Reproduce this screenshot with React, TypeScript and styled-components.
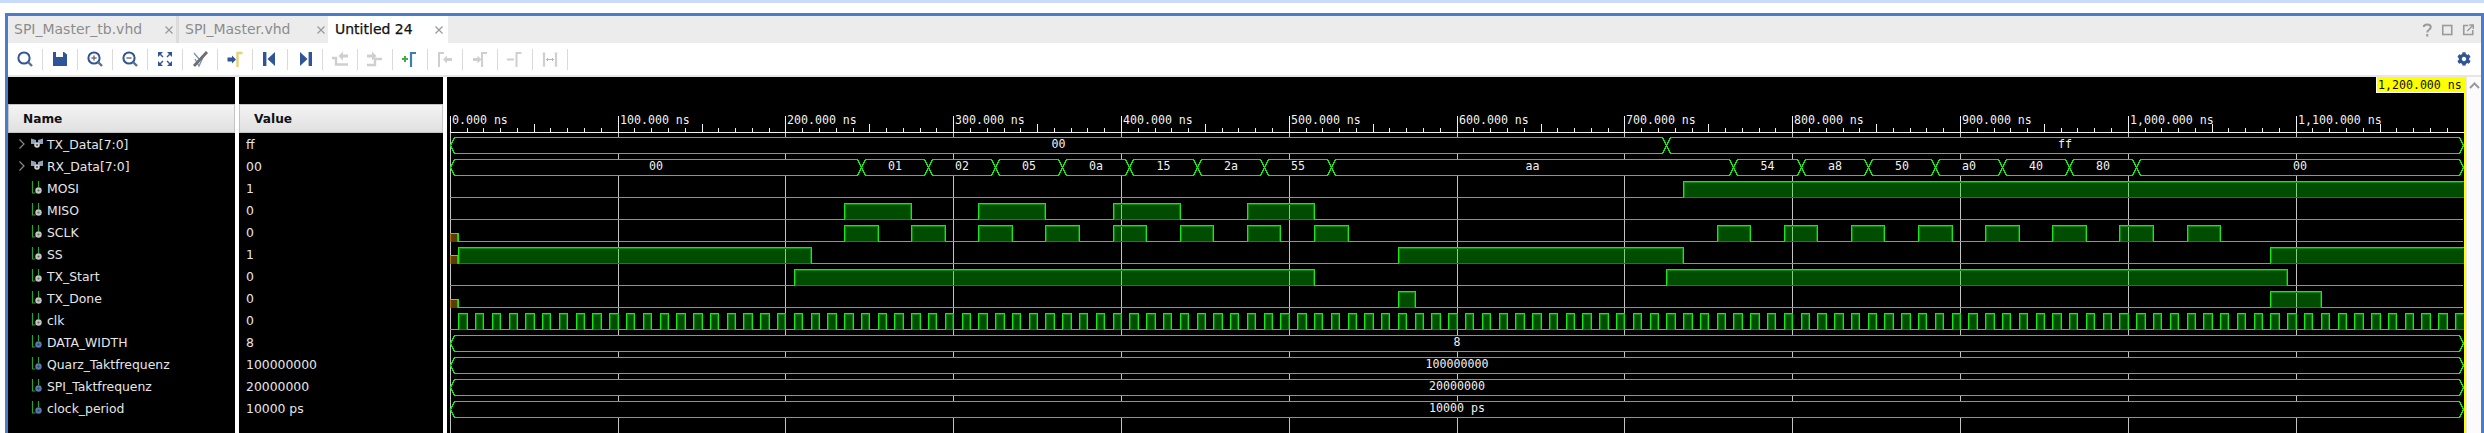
import React from 'react';
import styled, { createGlobalStyle } from 'styled-components';
import { FaCog } from 'react-icons/fa';

const Global = createGlobalStyle`
  html, body { margin: 0; padding: 0; background: #fff; overflow: hidden; }
  body { font-family: "DejaVu Sans", sans-serif; }
`;

const Page = styled.div`
  width: 2484px; height: 433px; overflow: hidden; display: flex; flex-direction: column;
  background: #fff; border-top: 3px solid #c9dbfb; box-sizing: border-box; padding: 10px 0 0 5px;
`;
const Frame = styled.div`
  flex: 1; min-height: 0; display: flex; flex-direction: column;
  border: 3px solid #4a7cc9; border-bottom: 0;
`;
const TabStrip = styled.div`
  height: 27px; flex: none; display: flex; background: #ececec; align-items: stretch;
`;
const Tab = styled.div<{ $w: number; $active?: boolean; $sep?: boolean }>`
  width: ${p => p.$w}px; box-sizing: border-box; display: flex; align-items: center; justify-content: space-between;
  padding: 0 3px 2px 6px;
  ${p => p.$active ? 'padding-left: 7px; padding-right: 5px; -webkit-text-stroke: 0.25px #111;' : ''}
  font-size: 14px; color: ${p => p.$active ? '#111' : '#8c8c8c'};
  background: ${p => p.$active ? '#fff' : '#ececec'};
  border-right: ${p => p.$sep ? '3px solid #dcdcdc' : '0'};
`;
const TabClose = styled.svg`
  width: 8px; height: 8px; flex: none; margin-top: 3px; stroke: #999; stroke-width: 1.2; fill: none;
`;
const FrameTools = styled.div`
  margin-left: auto; display: flex; align-items: center; padding: 0 3px 0 0;
`;
const FrameTool = styled.svg`
  width: 20.5px; height: 16px;
`;
const Toolbar = styled.div`
  height: 32px; flex: none; display: flex; align-items: center; background: #fff; border-bottom: 2px solid #e6e6e6;
  padding-right: 10px;
`;
const ToolCell = styled.div`
  width: 34px; height: 21px; flex: none; display: flex; align-items: center; justify-content: center;
  border-right: 1px solid #dadada;
`;
const ToolIcon = styled.svg`
  width: 18px; height: 18px; overflow: visible;
`;
const GearSlot = styled.div`
  margin-left: auto; display: flex; color: #2f5597; font-size: 14px;
`;
const Main = styled.div`
  flex: 1; min-height: 0; display: flex; background: #fff;
`;
const Column = styled.div<{ $w: number }>`
  width: ${p => p.$w}px; flex: none; background: #000; display: flex; flex-direction: column;
  margin-right: 4px; padding-top: 27px; box-sizing: border-box;
`;
const HeaderCell = styled.div<{ $pad: number }>`
  height: 29px; flex: none; box-sizing: border-box; display: flex; align-items: center; padding-left: ${p => p.$pad}px;
  background: linear-gradient(#f4f4f4, #e0e0e0); border: 1px solid #c4c4c4;
  font-size: 12.2px; font-weight: bold; color: #111;
`;
const SignalRow = styled.div`
  height: 22px; flex: none; display: flex; align-items: center; padding-left: 10px;
  font-size: 12.4px; color: #e6e6e6; white-space: nowrap;
`;
const ValueRow = styled.div`
  height: 22px; flex: none; display: flex; align-items: center; padding-left: 7px;
  font-size: 12.4px; color: #e6e6e6; white-space: nowrap;
`;
const Expander = styled.svg`
  width: 12px; height: 12px; flex: none; stroke: #8a8a8a; stroke-width: 1.2; fill: none;
`;
const SigIcon = styled.svg`
  width: 14px; height: 14px; flex: none; margin-right: 3px;
`;
const WavePane = styled.div`
  width: 2019px; height: 356px; flex: none; background: #000;
  svg { display: block; }
  text { font-family: "DejaVu Sans Mono", monospace; font-size: 11.6px; fill: #f2f2f2; }
  text.cursor { fill: #111; }
`;
const ScrollTrack = styled.div`
  flex: 1; display: flex; justify-content: center; padding-top: 5px; background: #fbfbfb; border-left: 1px solid #e8e8e8;
`;
const ScrollUp = styled.svg`
  width: 11px; height: 7px; stroke: #9a9a9a; stroke-width: 2; fill: none;
`;

const NAVY = '#2f5597';
const DIS = '#cfcfcf';

const Glass = ({ sign }: { sign?: 'plus' | 'minus' }) => (
  <>
    <circle cx="8" cy="8" r="5.6" fill="none" stroke={NAVY} strokeWidth="2" />
    <path d="M12 12 L16 16" stroke="#5c6f8c" strokeWidth="2.4" />
    {sign && <path d="M5.4 8 H10.6" stroke="#6b6b6b" strokeWidth="1.4" />}
    {sign === 'plus' && <path d="M8 5.4 V10.6" stroke="#6b6b6b" strokeWidth="1.4" />}
  </>
);
const Gamma = ({ x, c, w = 1.8 }: { x: number; c: string; w?: number }) => (
  <path d={`M${x} 17 V3 H${x + 5}`} fill="none" stroke={c} strokeWidth={w} />
);

const toolIcons: React.ReactNode[] = [
  <Glass />,
  <path d="M2 2 H5 V7 H12 V2 H13 L16 4.5 V16 H2 Z" fill={NAVY} />,
  <Glass sign="plus" />,
  <Glass sign="minus" />,
  <>
    <path d="M2 2 H7 L2 7 Z M16 2 H11 L16 7 Z M2 16 H7 L2 11 Z M16 16 H11 L16 11 Z" fill={NAVY} />
    <path d="M3 3 L7 7 M15 3 L11 7 M3 15 L7 11 M15 15 L11 11" stroke={NAVY} strokeWidth="1.4" />
  </>,
  <>
    <path d="M3 3 L8 9 M13 5 L8 16 L4 9" fill="none" stroke="#7f95b8" strokeWidth="1.4" />
    <path d="M16 2 L3 16" stroke="#6e6e6e" strokeWidth="2.8" />
  </>,
  <>
    <path d="M1.5 7.5 H6 V5.5 L10 9.5 L6 13.5 V11.5 H1.5 Z" fill={NAVY} />
    <Gamma x={11.5} c="#e6d27a" w={2.4} />
  </>,
  <>
    <path d="M2 2 H5.4 V16 H2 Z" fill={NAVY} />
    <path d="M14 2 V16 L6.5 9 Z" fill={NAVY} />
  </>,
  <>
    <path d="M12.6 2 H16 V16 H12.6 Z" fill={NAVY} />
    <path d="M4 2 V16 L11.5 9 Z" fill={NAVY} />
  </>,
  <>
    <path d="M1 8 H5 V14.5 H17" fill="none" stroke={DIS} strokeWidth="2.4" />
    <path d="M17 4.5 H12 V1.5 L7.5 6 L12 10.5 V7.5 H17 Z" fill={DIS} />
  </>,
  <>
    <path d="M1 15 H9 V9 H16" fill="none" stroke={DIS} strokeWidth="2.4" />
    <path d="M1 4.5 H6 V1.5 L10.5 6 L6 10.5 V7.5 H1 Z" fill={DIS} />
  </>,
  <>
    <path d="M1 9 H7 M4 6 V12" stroke="#3fae3f" strokeWidth="2" />
    <Gamma x={10} c="#3a80b5" w={2.2} />
  </>,
  <>
    <Gamma x={3} c={DIS} w={2} />
    <path d="M16 8 H11 V5.5 L7 9.5 L11 13.5 V11 H16 Z" fill={DIS} />
  </>,
  <>
    <path d="M2 8 H6.5 V5.5 L10.5 9.5 L6.5 13.5 V11 H2 Z" fill={DIS} />
    <Gamma x={11} c={DIS} w={2} />
  </>,
  <>
    <path d="M1 9.5 H8" stroke={DIS} strokeWidth="2" />
    <Gamma x={10.5} c={DIS} w={2} />
  </>,
  <>
    <path d="M3 3 V16 M15 3 V16" stroke={DIS} strokeWidth="2.2" />
    <path d="M1.6 3 H4.4 M13.6 3 H16.4 M1.6 16 H4.4 M13.6 16 H16.4" stroke={DIS} strokeWidth="1" />
    <path d="M5.5 9.5 H12.5 M7 8 L5.5 9.5 L7 11 M11 8 L12.5 9.5 L11 11" fill="none" stroke="#b5b5b5" strokeWidth="1" />
  </>,
];

type Kind = 'bus' | 'bit' | 'param';
const signals: { name: string; value: string; kind: Kind }[] = [
  { name: 'TX_Data[7:0]', value: 'ff', kind: 'bus' },
  { name: 'RX_Data[7:0]', value: '00', kind: 'bus' },
  { name: 'MOSI', value: '1', kind: 'bit' },
  { name: 'MISO', value: '0', kind: 'bit' },
  { name: 'SCLK', value: '0', kind: 'bit' },
  { name: 'SS', value: '1', kind: 'bit' },
  { name: 'TX_Start', value: '0', kind: 'bit' },
  { name: 'TX_Done', value: '0', kind: 'bit' },
  { name: 'clk', value: '0', kind: 'bit' },
  { name: 'DATA_WIDTH', value: '8', kind: 'param' },
  { name: 'Quarz_Taktfrequenz', value: '100000000', kind: 'param' },
  { name: 'SPI_Taktfrequenz', value: '20000000', kind: 'param' },
  { name: 'clock_period', value: '10000 ps', kind: 'param' },
];

const SignalGlyph = ({ kind }: { kind: Kind }) => (
  <SigIcon viewBox="0 0 14 14">
    {kind === 'bus' ? (
      <>
        <path d="M1 1.5 L6 3 V7 H1 Z M13 1.5 L8 3 V7 H13 Z" fill="#8ea3b5" />
        <circle cx="7" cy="8" r="2.8" fill="#d0d0d0" />
        <circle cx="7" cy="8" r="1.1" fill="#555" />
      </>
    ) : (
      <>
        <path d="M2.5 0 V12 H5.5 M8.5 0 V6" fill="none" stroke="#2ca02c" strokeWidth="1.2" />
        <circle cx="8.5" cy="9.5" r="3.2" fill={kind === 'bit' ? '#c4c4c4' : '#5d78a8'} />
        <circle cx="8.5" cy="9.5" r="1.1" fill={kind === 'bit' ? '#666' : '#2f3f60'} />
      </>
    )}
  </SigIcon>
);

/* ---- waveform drawing ---- */
const X = (t: number) => Math.floor(450.3 + 1.678 * t);
const top = (n: number) => 137 + 22 * n;
const low = (n: number) => 153 + 22 * n;
const GREEN = '#17e617';
const INNER = '#0a8a0a';

const Digital = ({ row, highs, start = 0 }: { row: number; highs: [number, number][]; start?: number }) => {
  const t = top(row), b = low(row);
  return (
    <g>
      <rect x={X(start)} y={b} width={X(1200) - X(start)} height={1} fill={GREEN} />
      {highs.map(([a, z]) => {
        const x1 = X(a), x2 = X(z);
        return (
          <g key={a}>
            <rect x={x1} y={t} width={x2 - x1 + 1} height={b - t} fill="#00e600" fillOpacity={0.33} />
            <rect x={x1} y={b} width={x2 - x1 + 1} height={1} fill="#000" />
            <rect x={x1} y={b} width={x2 - x1 + 1} height={1} fill={INNER} />
            <rect x={x1 + 1} y={t + 1} width={x2 - x1 - 1} height={1} fill={INNER} />
            <rect x={x1 + 1} y={t + 1} width={1} height={b - t - 1} fill={INNER} />
            {z < 1200 && <rect x={x2 - 1} y={t + 1} width={1} height={b - t - 1} fill={INNER} />}
            <rect x={x1} y={t} width={x2 - x1 + 1} height={1} fill={GREEN} />
            <rect x={x1} y={t} width={1} height={b - t + 1} fill={GREEN} />
            {z < 1200 && <rect x={x2} y={t} width={1} height={b - t + 1} fill={GREEN} />}
          </g>
        );
      })}
    </g>
  );
};

const Unknown = ({ row }: { row: number }) => {
  const b = low(row);
  return (
    <g>
      <rect x={450} y={b - 8} width={8} height={9} fill="#5a3d00" />
      <rect x={450} y={b - 8} width={8} height={1} fill="#e8960a" />
      <rect x={450} y={b - 7} width={1} height={8} fill="#b87a08" />
      <rect x={457} y={b - 7} width={1} height={8} fill="#b87a08" />
      <rect x={458} y={b - 8} width={1} height={9} fill={GREEN} />
    </g>
  );
};

const Bus = ({ row, edges, labels }: { row: number; edges: number[]; labels: string[] }) => {
  const t = top(row) + 0.5, b = low(row) + 0.5, c = (t + b) / 2;
  return (
    <g>
      {labels.map((label, i) => {
        const x1 = X(edges[i]) + 0.5, x2 = X(edges[i + 1]) + 0.5;
        return (
          <g key={i}>
            <polygon
              points={`${x1},${c} ${x1 + 4},${t} ${x2 - 4},${t} ${x2},${c} ${x2 - 4},${b} ${x1 + 4},${b}`}
              fill="#000" stroke={GREEN} strokeWidth={1} shapeRendering="crispEdges"
            />
            <text x={(x1 + x2) / 2} y={top(row) + 10.5} textAnchor="middle">{label}</text>
          </g>
        );
      })}
    </g>
  );
};

const range = (from: number, to: number, step: number) => {
  const out: number[] = [];
  for (let v = from; v <= to; v += step) out.push(v);
  return out;
};
const clkHighs = range(5, 1195, 10).map(v => [v, v + 5] as [number, number]);
const sclkHighs = [...range(235, 515, 40), ...range(755, 1035, 40)].map(v => [v, v + 20] as [number, number]);
const rulerText = (t: number) => (t >= 1000 ? `1,${String(t - 1000).padStart(3, '0')}.000 ns` : `${t}.000 ns`);

const Waves = () => (
  <svg width={2019} height={356} viewBox="447 77 2019 356">
    {range(0, 1100, 100).map(t => (
      <rect key={t} x={X(t)} y={133} width={1} height={300} fill="#c4c4c4" />
    ))}
    {range(0, 1200, 10).map(t => {
      const h = t % 100 === 0 ? 16 : t % 50 === 0 ? 8 : 4;
      return t === 1200 ? null : <rect key={t} x={X(t)} y={132 - h} width={1} height={h} fill="#f0f0f0" />;
    })}
    <rect x={450} y={132} width={2014} height={1} fill="#f0f0f0" />
    {range(0, 1100, 100).map(t => (
      <text key={t} x={X(t) + 2} y={124}>{rulerText(t)}</text>
    ))}

    <Bus row={0} edges={[0, 725, 1200]} labels={['00', 'ff']} />
    <Bus
      row={1}
      edges={[0, 245, 285, 325, 365, 405, 445, 485, 525, 765, 805, 845, 885, 925, 965, 1005, 1200]}
      labels={['00', '01', '02', '05', '0a', '15', '2a', '55', 'aa', '54', 'a8', '50', 'a0', '40', '80', '00']}
    />
    <Digital row={2} highs={[[735, 1200]]} />
    <Digital row={3} highs={[[235, 275], [315, 355], [395, 435], [475, 515]]} />
    <Unknown row={4} />
    <Digital row={4} start={5} highs={sclkHighs} />
    <Unknown row={5} />
    <Digital row={5} start={5} highs={[[5, 215], [565, 735], [1085, 1200]]} />
    <Digital row={6} highs={[[205, 515], [725, 1095]]} />
    <Unknown row={7} />
    <Digital row={7} start={5} highs={[[565, 575], [1085, 1115]]} />
    <Digital row={8} highs={clkHighs} />
    <Bus row={9} edges={[0, 1200]} labels={['8']} />
    <Bus row={10} edges={[0, 1200]} labels={['100000000']} />
    <Bus row={11} edges={[0, 1200]} labels={['20000000']} />
    <Bus row={12} edges={[0, 1200]} labels={['10000 ps']} />

    <rect x={2464} y={92} width={2} height={341} fill="#ffff00" />
    <rect x={2376} y={77} width={88} height={16} fill="#fff" />
    <rect x={2377} y={77} width={89} height={15} fill="#ffff00" />
    <text className="cursor" x={2378} y={89}>1,200.000 ns</text>
  </svg>
);

export default function App() {
  return (
    <>
      <Global />
      <Page>
        <Frame>
          <TabStrip>
            <Tab $w={171} $sep>
              SPI_Master_tb.vhd
              <TabClose viewBox="0 0 8 8"><path d="M0.5 0.5 L7.5 7.5 M7.5 0.5 L0.5 7.5" /></TabClose>
            </Tab>
            <Tab $w={149}>
              SPI_Master.vhd
              <TabClose viewBox="0 0 8 8"><path d="M0.5 0.5 L7.5 7.5 M7.5 0.5 L0.5 7.5" /></TabClose>
            </Tab>
            <Tab $w={120} $active>
              Untitled 24
              <TabClose viewBox="0 0 8 8"><path d="M0.5 0.5 L7.5 7.5 M7.5 0.5 L0.5 7.5" /></TabClose>
            </Tab>
            <FrameTools>
              <FrameTool viewBox="0 0 20 16">
                <path d="M6.5 5 C6.5 1.5 13.5 1.5 13.5 5 C13.5 8 10 7.5 10 10.5 M10 12 V14.5" fill="none" stroke="#9a9a9a" strokeWidth="2" />
              </FrameTool>
              <FrameTool viewBox="0 0 20 16">
                <rect x="5.5" y="3.5" width="9" height="9" fill="none" stroke="#9a9a9a" strokeWidth="1.6" />
              </FrameTool>
              <FrameTool viewBox="0 0 20 16">
                <path d="M10 3.5 H5.5 V12.5 H14.5 V8" fill="none" stroke="#9a9a9a" strokeWidth="1.6" />
                <path d="M9 9 L14.5 3.5 M11 3 H15 V7" fill="none" stroke="#9a9a9a" strokeWidth="1.4" />
              </FrameTool>
            </FrameTools>
          </TabStrip>
          <Toolbar>
            {toolIcons.map((icon, i) => (
              <ToolCell key={i}>
                <ToolIcon viewBox="0 0 18 18">{icon}</ToolIcon>
              </ToolCell>
            ))}
            <GearSlot><FaCog /></GearSlot>
          </Toolbar>
          <Main>
            <Column $w={227}>
              <HeaderCell $pad={14}>Name</HeaderCell>
              {signals.map(s => (
                <SignalRow key={s.name}>
                  {s.kind === 'bus'
                    ? <Expander viewBox="0 0 12 12"><path d="M1.5 1.5 L6 6 L1.5 10.5" /></Expander>
                    : <Expander as="span" />}
                  <SignalGlyph kind={s.kind} />
                  {s.name}
                </SignalRow>
              ))}
            </Column>
            <Column $w={204}>
              <HeaderCell $pad={14}>Value</HeaderCell>
              {signals.map(s => <ValueRow key={s.name}>{s.value}</ValueRow>)}
            </Column>
            <WavePane><Waves /></WavePane>
            <ScrollTrack>
              <ScrollUp viewBox="0 0 11 7"><path d="M1 6 L5.5 1.5 L10 6" /></ScrollUp>
            </ScrollTrack>
          </Main>
        </Frame>
      </Page>
    </>
  );
}
